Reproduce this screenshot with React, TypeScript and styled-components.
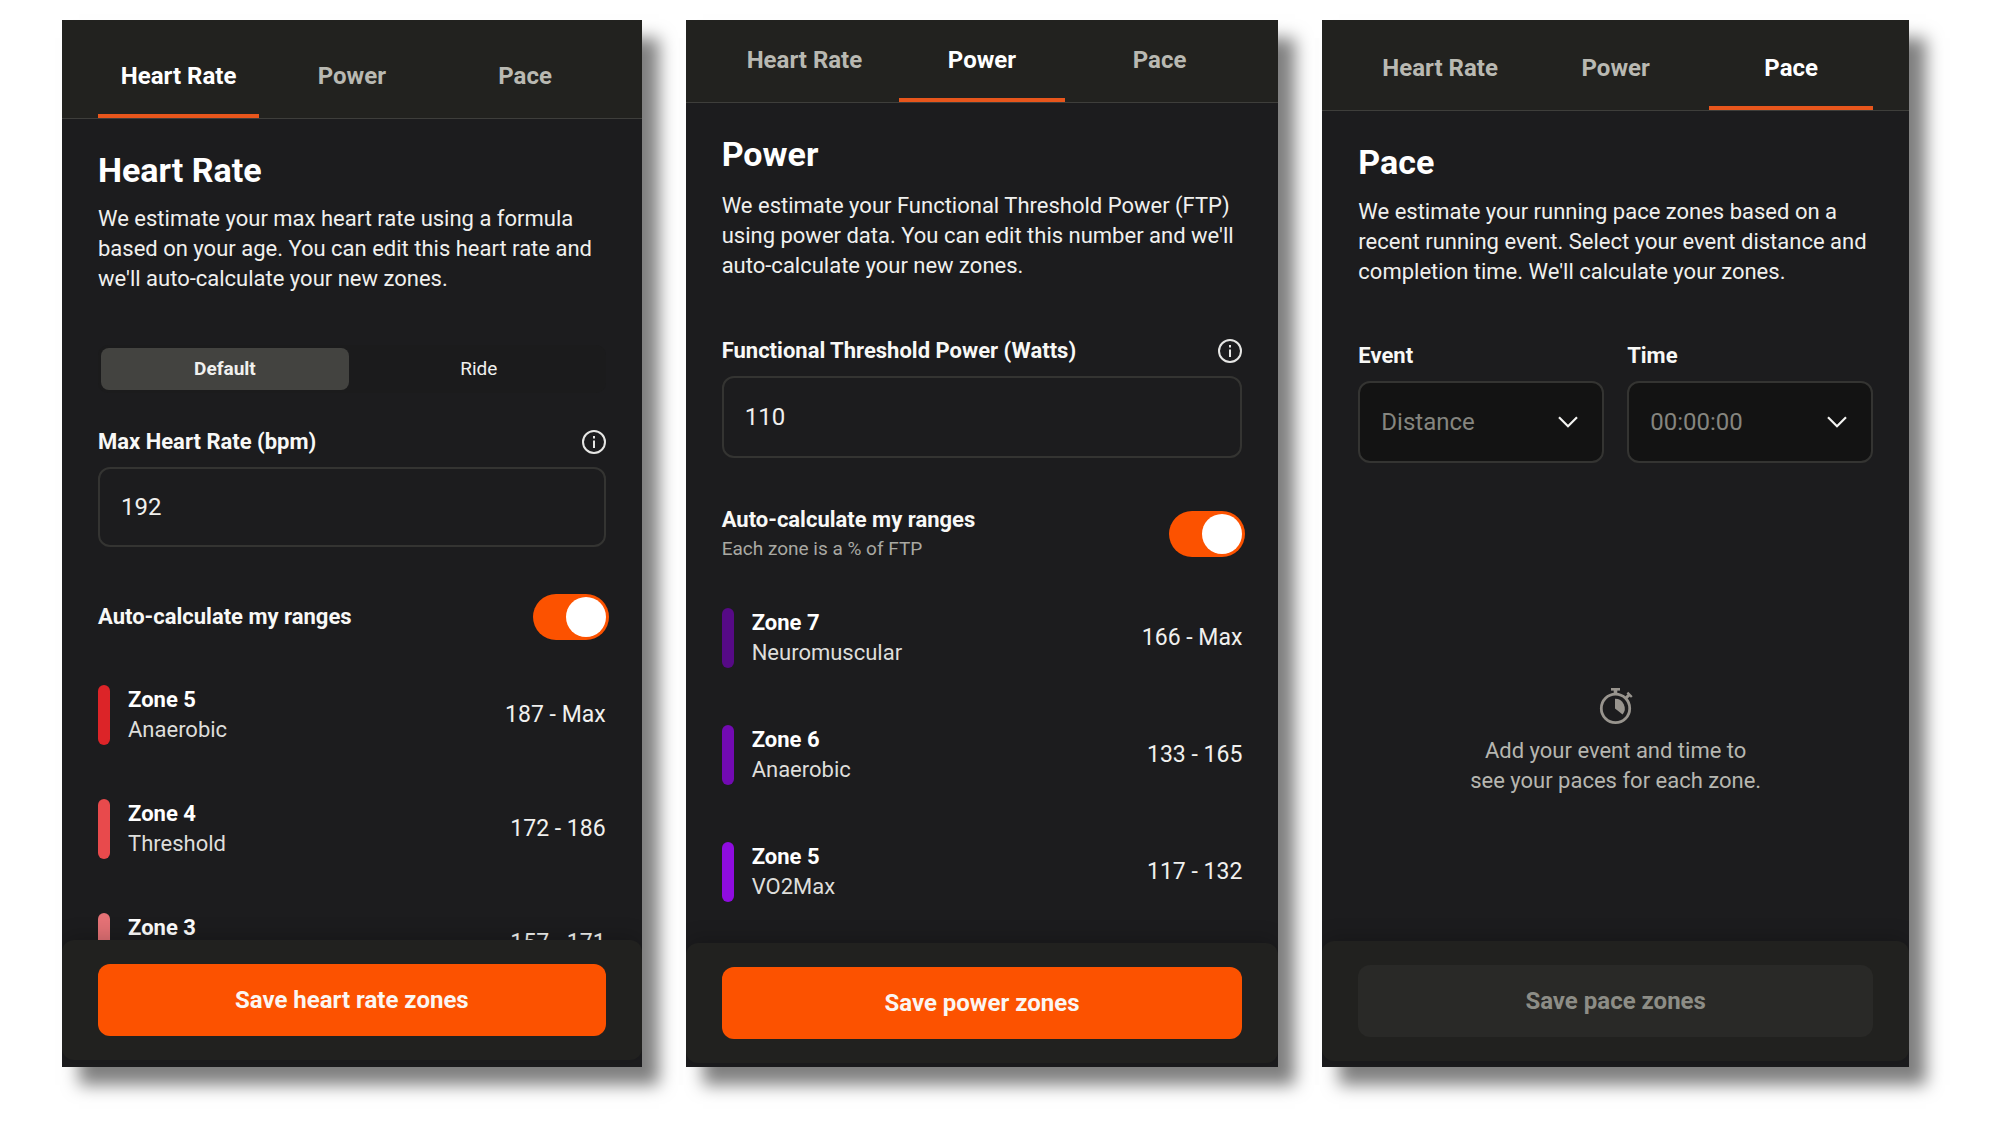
import React, { useId, useState } from "react";
import styled, { createGlobalStyle } from "styled-components";

const GlobalStyle = createGlobalStyle`
  *, *::before, *::after { box-sizing: border-box; }
  body {
    margin: 0;
    background: #ffffff;
    font-family: Roboto, "Liberation Sans", sans-serif;
    font-size: 22px;
    line-height: 30px;
    color: #f0f0ee;
  }
  button, input, select { font: inherit; color: inherit; margin: 0; }
  h2, p, ul { margin: 0; padding: 0; }
`;

const Page = styled.main`
  display: grid;
  grid-template-columns: 580fr 593fr 587fr;
  gap: 44px;
  height: 100vh;
  min-height: 720px;
  padding: 20px 91px 58px 62px;
`;

const Panel = styled.section`
  display: flex;
  flex-direction: column;
  min-width: 0;
  min-height: 0;
  overflow: hidden;
  background: #1c1c1e;
  box-shadow: 17px 18px 16px rgba(0, 0, 0, 0.5);
`;

const TabBar = styled.div<{ $inset: number }>`
  display: grid;
  grid-template-columns: repeat(3, 1fr);
  gap: 12px;
  padding: ${(p) => p.$inset}px 36px 0;
  background: #22221f;
  border-bottom: 1px solid #3e3e3b;
`;

const Tab = styled.button<{ $active: boolean }>`
  padding: 0 0 23px;
  border: 0;
  border-bottom: 4px solid ${(p) => (p.$active ? "#e8561c" : "transparent")};
  background: none;
  font-size: 24px;
  font-weight: 700;
  color: ${(p) => (p.$active ? "#ffffff" : "#b9b9b2")};
`;

const Body = styled.div`
  flex: 1;
  min-height: 0;
  overflow: hidden;
  padding: 31px 36px 0;
`;

const Title = styled.h2`
  font-size: 34px;
  line-height: 40px;
  font-weight: 700;
  color: #ffffff;
`;

const Description = styled.p<{ $gap: number }>`
  margin-top: ${(p) => p.$gap}px;
`;

const Segments = styled.div`
  display: grid;
  grid-template-columns: 1fr 1fr;
  gap: 6px;
  margin-top: 51px;
  padding: 3px;
  border-radius: 10px;
  background: #1b1b1c;
`;

const Segment = styled.button<{ $active: boolean }>`
  height: 42px;
  padding: 0;
  border: 0;
  border-radius: 8px;
  background: ${(p) => (p.$active ? "#434340" : "transparent")};
  font-size: 19px;
  font-weight: ${(p) => (p.$active ? 700 : 400)};
`;

const Field = styled.div<{ $gap: number }>`
  display: flex;
  flex-direction: column;
  gap: 10px;
  margin-top: ${(p) => p.$gap}px;
`;

const FieldHead = styled.div`
  display: flex;
  align-items: center;
  justify-content: space-between;
`;

const Label = styled.label`
  font-weight: 700;
  color: #f8f8f6;
`;

const InfoButton = styled.button`
  display: flex;
  padding: 0;
  border: 0;
  background: none;
`;

const TextBox = styled.input<{ $height: number }>`
  width: 100%;
  height: ${(p) => p.$height}px;
  padding: 0 21px;
  border: 2px solid #343432;
  border-radius: 12px;
  background: transparent;
  font-size: 24px;
`;

const ToggleRow = styled.div`
  display: flex;
  align-items: center;
  justify-content: space-between;
  margin: 47px -3px 45px 0;
`;

const ToggleText = styled.div`
  display: flex;
  flex-direction: column;
`;

const Hint = styled.span`
  font-size: 19px;
  line-height: 28px;
  color: #a9a9a3;
`;

const Switch = styled.input`
  appearance: none;
  display: flex;
  justify-content: flex-start;
  width: 76px;
  height: 46px;
  padding: 3px;
  border-radius: 23px;
  background: #434340;
  &:checked {
    justify-content: flex-end;
    background: #fc5200;
  }
  &::before {
    content: "";
    width: 40px;
    height: 40px;
    border-radius: 50%;
    background: #ffffff;
  }
`;

const ZoneList = styled.ul<{ $gap: number }>`
  display: flex;
  flex-direction: column;
  gap: ${(p) => p.$gap}px;
  list-style: none;
`;

const ZoneItem = styled.li`
  display: flex;
  align-items: center;
  gap: 18px;
`;

const ZoneBar = styled.span<{ $color: string }>`
  width: 12px;
  height: 60px;
  border-radius: 6px;
  background: ${(p) => p.$color};
`;

const ZoneText = styled.div`
  display: flex;
  flex: 1;
  flex-direction: column;
`;

const ZoneName = styled.strong`
  color: #ffffff;
`;

const ZoneKind = styled.span`
  min-height: 30px;
  color: #dededb;
`;

const ZoneRange = styled.span`
  font-size: 23px;
`;

const SelectRow = styled.div`
  display: grid;
  grid-template-columns: 1fr 1fr;
  gap: 23px;
`;

const SelectBox = styled.div`
  display: grid;
  align-items: center;
  > * { grid-area: 1 / 1; }
  > svg {
    justify-self: end;
    margin-right: 26px;
    pointer-events: none;
  }
`;

const Select = styled.select`
  appearance: none;
  width: 100%;
  height: 82px;
  padding: 0 21px;
  border: 2px solid #343432;
  border-radius: 12px;
  background: #131313;
  font-size: 24px;
  color: #85857f;
`;

const Empty = styled.div`
  display: flex;
  flex-direction: column;
  align-items: center;
  gap: 12px;
  padding-top: 225px;
  text-align: center;
  color: #b6b6b0;
`;

const EmptyText = styled.p`
  max-width: 300px;
`;

const Footer = styled.footer<{ $bottom: number }>`
  display: flex;
  margin-bottom: ${(p) => p.$bottom}px;
  padding: 24px 36px;
  border-radius: 12px;
  background: #21211f;
  box-shadow: 0 -4px 20px rgba(0, 0, 0, 0.2);
`;

const SaveButton = styled.button`
  flex: 1;
  height: 72px;
  border: 0;
  border-radius: 12px;
  background: #fc5200;
  font-size: 24px;
  font-weight: 700;
  color: #fbf6f2;
  &:disabled {
    background: #292927;
    color: #8d8d86;
  }
`;

const tabNames = ["Heart Rate", "Power", "Pace"];

function Tabs({ active, inset }: { active: string; inset: number }) {
  return (
    <TabBar role="tablist" $inset={inset}>
      {tabNames.map((name) => (
        <Tab key={name} type="button" role="tab" aria-selected={name === active} $active={name === active}>
          {name}
        </Tab>
      ))}
    </TabBar>
  );
}

function InfoIcon() {
  return (
    <svg width="24" height="24" viewBox="0 0 24 24" fill="none" stroke="#e6e6e4" strokeWidth="2" aria-hidden="true">
      <circle cx="12" cy="12" r="11" />
      <path d="M12 10.5v7.5M12 6v2.4" />
    </svg>
  );
}

function Chevron() {
  return (
    <svg width="20" height="12" viewBox="0 0 20 12" fill="none" stroke="#f4f4f2" strokeWidth="2.2" aria-hidden="true">
      <path d="M1 1.2l9 9 9-9" />
    </svg>
  );
}

function Stopwatch() {
  return (
    <svg width="34" height="36" viewBox="0 0 34 36" fill="none" stroke="#98948e" aria-hidden="true">
      <circle cx="16.5" cy="20.4" r="14.2" strokeWidth="2.8" />
      <path d="M12 1.3h9" strokeWidth="2.6" />
      <path d="M16.5 2v5" strokeWidth="3.6" />
      <path d="M26.4 10.6l4-4" strokeWidth="3" />
      <path d="M28.4 4.6l4.4 4.4" strokeWidth="2.4" />
      <path d="M16 10.8a9.6 9.6 0 0 1 7.6 15.6L16 20.6z" fill="#98948e" stroke="none" />
    </svg>
  );
}

interface NumberFieldProps {
  label: string;
  initial: string;
  gap: number;
  height: number;
}

function NumberField({ label, initial, gap, height }: NumberFieldProps) {
  const id = useId();
  const [value, setValue] = useState(initial);
  return (
    <Field $gap={gap}>
      <FieldHead>
        <Label htmlFor={id}>{label}</Label>
        <InfoButton type="button" aria-label={`About ${label}`}>
          <InfoIcon />
        </InfoButton>
      </FieldHead>
      <TextBox
        id={id}
        inputMode="numeric"
        $height={height}
        value={value}
        onChange={(e) => setValue(e.target.value)}
      />
    </Field>
  );
}

function AutoToggle({ hint }: { hint?: string }) {
  const id = useId();
  return (
    <ToggleRow>
      <ToggleText>
        <Label htmlFor={id}>Auto-calculate my ranges</Label>
        {hint && <Hint>{hint}</Hint>}
      </ToggleText>
      <Switch id={id} type="checkbox" role="switch" defaultChecked />
    </ToggleRow>
  );
}

function SelectField({ label, placeholder, gap }: { label: string; placeholder: string; gap: number }) {
  const id = useId();
  return (
    <Field $gap={gap}>
      <Label htmlFor={id}>{label}</Label>
      <SelectBox>
        <Select id={id}>
          <option>{placeholder}</option>
        </Select>
        <Chevron />
      </SelectBox>
    </Field>
  );
}

interface Zone {
  name: string;
  kind?: string;
  range: string;
  color: string;
}

function Zones({ zones, gap }: { zones: Zone[]; gap: number }) {
  return (
    <ZoneList $gap={gap}>
      {zones.map((z) => (
        <ZoneItem key={z.name}>
          <ZoneBar $color={z.color} />
          <ZoneText>
            <ZoneName>{z.name}</ZoneName>
            <ZoneKind>{z.kind}</ZoneKind>
          </ZoneText>
          <ZoneRange>{z.range}</ZoneRange>
        </ZoneItem>
      ))}
    </ZoneList>
  );
}

const heartZones: Zone[] = [
  { name: "Zone 5", kind: "Anaerobic", range: "187 - Max", color: "#dc2428" },
  { name: "Zone 4", kind: "Threshold", range: "172 - 186", color: "#e84a4c" },
  { name: "Zone 3", range: "157 - 171", color: "#e57276" },
];

const powerZones: Zone[] = [
  { name: "Zone 7", kind: "Neuromuscular", range: "166 - Max", color: "#560a86" },
  { name: "Zone 6", kind: "Anaerobic", range: "133 - 165", color: "#720ab2" },
  { name: "Zone 5", kind: "VO2Max", range: "117 - 132", color: "#8f0ce0" },
];

export default function App() {
  const [mode, setMode] = useState("Default");
  return (
    <>
      <GlobalStyle />
      <Page>
        <Panel>
          <Tabs active="Heart Rate" inset={41} />
          <Body>
            <Title>Heart Rate</Title>
            <Description $gap={14}>
              We estimate your max heart rate using a formula
              <br />
              based on your age. You can edit this heart rate and
              <br />
              we'll auto-calculate your new zones.
            </Description>
            <Segments>
              {["Default", "Ride"].map((name) => (
                <Segment key={name} type="button" $active={mode === name} onClick={() => setMode(name)}>
                  {name}
                </Segment>
              ))}
            </Segments>
            <NumberField label="Max Heart Rate (bpm)" initial="192" gap={34} height={80} />
            <AutoToggle />
            <Zones zones={heartZones} gap={54} />
          </Body>
          <Footer $bottom={7}>
            <SaveButton type="button">Save heart rate zones</SaveButton>
          </Footer>
        </Panel>

        <Panel>
          <Tabs active="Power" inset={25} />
          <Body>
            <Title>Power</Title>
            <Description $gap={17}>
              We estimate your Functional Threshold Power (FTP)
              <br />
              using power data. You can edit this number and we'll
              <br />
              auto-calculate your new zones.
            </Description>
            <NumberField label="Functional Threshold Power (Watts)" initial="110" gap={55} height={82} />
            <AutoToggle hint="Each zone is a % of FTP" />
            <Zones zones={powerZones} gap={57} />
          </Body>
          <Footer $bottom={4}>
            <SaveButton type="button">Save power zones</SaveButton>
          </Footer>
        </Panel>

        <Panel>
          <Tabs active="Pace" inset={33} />
          <Body>
            <Title>Pace</Title>
            <Description $gap={15}>
              We estimate your running pace zones based on a
              <br />
              recent running event. Select your event distance and
              <br />
              completion time. We'll calculate your zones.
            </Description>
            <SelectRow>
              <SelectField label="Event" placeholder="Distance" gap={54} />
              <SelectField label="Time" placeholder="00:00:00" gap={54} />
            </SelectRow>
            <Empty>
              <Stopwatch />
              <EmptyText>
                Add your event and time to
                <br />
                see your paces for each zone.
              </EmptyText>
            </Empty>
          </Body>
          <Footer $bottom={6}>
            <SaveButton type="button" disabled>
              Save pace zones
            </SaveButton>
          </Footer>
        </Panel>
      </Page>
    </>
  );
}
